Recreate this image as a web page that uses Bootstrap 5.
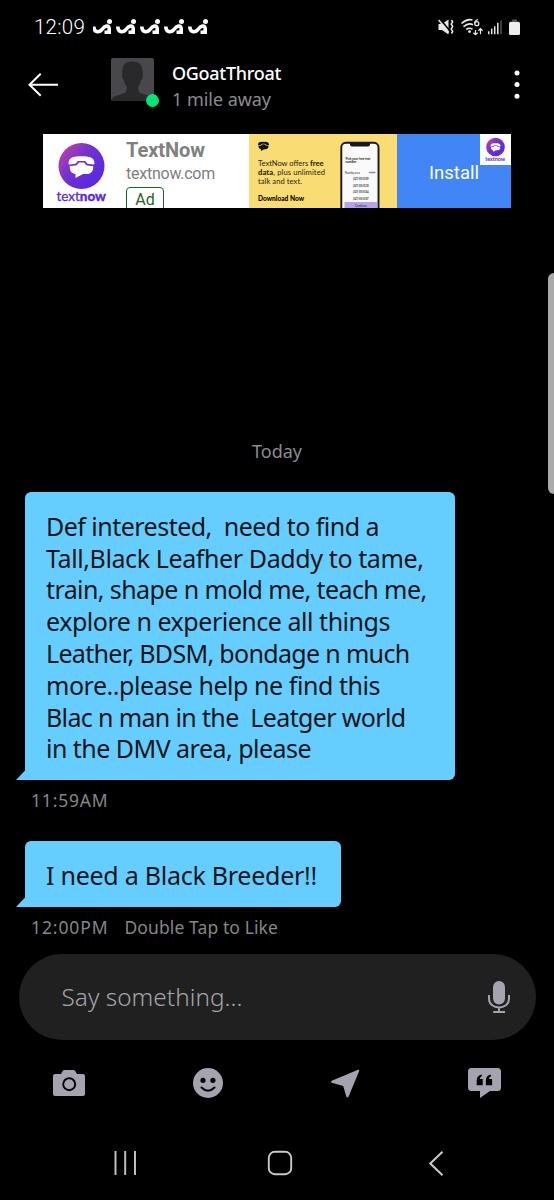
<!DOCTYPE html>
<html lang="en">
<head>
<meta charset="utf-8">
<meta name="viewport" content="width=device-width, initial-scale=1">
<title>Chat</title>
<link href="https://cdn.jsdelivr.net/npm/bootstrap@5.3.0/dist/css/bootstrap.min.css" rel="stylesheet">
<style>
body{background:#000;color:#fff;font-family:"Noto Sans",sans-serif;overflow:hidden}
svg{display:block;flex:none}
.phone{width:554px;height:1200px}
.fit{display:inline-block;white-space:pre}
.statusbar{height:54px;padding:0 32px 0 34px}
.clock{font:350 20.5px/55px Roboto,sans-serif}
.chat-head{height:66px;padding-left:28px}
.back{margin-top:18.5px}
.who{margin-top:6px}
.more{margin:16px 34px 0 0}
.avatar{width:43px;height:43px;margin:4px 18px 0 53px}
.online{width:13px;height:13px;background:#00e676;right:-5px;bottom:-6px}
.uname{font-size:18px;line-height:26px;font-weight:500}
.dist{font-size:18px;line-height:26px;color:#8b8b90}
.ad{margin:14px 43px 0;height:74px;font-family:Roboto,sans-serif;overflow:hidden}
.ad-main{width:206px;background:#fff;color:#808080;padding-left:12px}
.ad-copy{margin-left:19px;padding-top:3px}
.ad-title{font-size:20px;line-height:26px;font-weight:700}
.ad-url{font-size:16px;line-height:22px}
.ad-tag{width:38px;height:26px;margin-top:2px;border:1.5px solid #1f6426;border-radius:4px;color:#1f6426;font-size:16px;line-height:23px}
.ad-cta{width:114px;background:#4285f4;font-size:18.5px;line-height:79px}
.ad-mini{width:31px;height:31px;top:0;right:0}
.messages{height:746px}
.day{margin-top:230px;height:26px;line-height:26px;font-size:18px;color:#8b8b90}
.bubble{margin-left:25px;background:#66ceff;color:#08141a;border-radius:6px 6px 6px 0;padding-left:21px;font-size:25px;line-height:31.8px}
.bubble::before{content:"";position:absolute;left:-9px;bottom:0;width:9.5px;height:10px;background:inherit;clip-path:polygon(0 100%,100% 0,100% 100%)}
.bubble .ln{height:31.8px}
.bubble-a{margin-top:28px;width:430px;height:288px;padding-top:18.8px}
.bubble-b{margin-top:29px;width:316px;height:66px;padding-top:19px}
.stamp{margin-left:31px;height:32px;padding-top:4px;font-size:17.5px;line-height:32px;color:#85858a}
.like{margin-left:16px}
.compose{margin:0 18.5px;height:86px;border-radius:43px;background:#202020;padding:0 26px 0 43px}
.hint{font-size:24.3px;color:#a5a5aa;font-weight:300;padding-top:1px}
.tools{height:86px}
.sysnav{height:74px;padding:0 40px 0 47px}
.edge{right:0;top:273px;width:6.5px;height:221px;background:#aaa;border-radius:6px 0 0 6px}
</style>
</head>
<body>
<svg width="0" height="0" class="position-absolute" aria-hidden="true">
  <defs>
    <linearGradient id="violet" x1="0" y1="0.1" x2="0.8" y2="0.8"><stop offset="0" stop-color="#c343a4"/><stop offset=".5" stop-color="#7431d3"/><stop offset="1" stop-color="#5b29df"/></linearGradient>
    <symbol id="handset" viewBox="0 0 28 22"><path d="M1 7.500C1 1.500 6 .3 14 .3S27 1.500 27 7.500Q27 8.700 25.500 8.500L20.500 7.800C18.500 7.500 19 5 17 5H11C9 5 9.500 7.500 7.500 7.800L2.500 8.500Q1 8.700 1 7.500z"/><path d="M2.200 10.200L8 9.400C10.500 9 10.500 6.400 12 6.400h4c1.500 0 1.500 2.600 4 3l5.800.8C25.800 16 23 18 19 18h-3.500L8 22v-4C4.500 17.500 2.200 15.500 2.200 10.200z"/></symbol>
  </defs>
</svg>
<main class="phone position-relative d-flex flex-column">
  <div class="statusbar d-flex align-items-center">
    <span class="clock"><span class="fit" data-w="51">12:09</span></span>
    <svg width="120" height="18" viewBox="0 0 120 18" class="ms-2" aria-hidden="true">
      <g fill="none" stroke="#fff" stroke-width="3.600" stroke-linecap="butt" stroke-linejoin="round">
        <path id="sw" d="M.8 8.500C.8 14.500 6 15 9 11.500C11.500 8 16.200 6 16.200 11V16M16.200 14.200H11.500"/>
        <use href="#sw" x="24"/><use href="#sw" x="48"/><use href="#sw" x="72"/><use href="#sw" x="96"/>
      </g>
      <g fill="#fff"><circle cx="16.500" cy="3.500" r="2.500"/><circle cx="40.500" cy="3.500" r="2.500"/><circle cx="64.500" cy="3.500" r="2.500"/><circle cx="88.500" cy="3.500" r="2.500"/><circle cx="112.500" cy="3.500" r="2.500"/></g>
    </svg>
    <svg class="ms-auto" width="84" height="18" viewBox="438 18 84 18" aria-hidden="true">
      <path d="M438.500 24h3.500l6.500-4.500v15l-6.500-4.500h-3.500z" fill="#e8e8e8"/><path d="M439.500 18.500l11 13" stroke="#000" stroke-width="1.700"/><path d="M438.700 20l10 12.500" stroke="#e8e8e8" stroke-width="1.500"/>
      <path d="M451.500 20l1.200 2-1.500 2 1.500 2.500-1.500 2.500 1.500 2.500-1.200 2" fill="none" stroke="#e8e8e8" stroke-width="1.500"/>
      <g fill="none" stroke="#e8e8e8" stroke-width="1.600"><path d="M461.500 23.500q5.500-5 11-3.500M463.500 26.700q5-4.300 9.500-2M466.300 29.500q3.200-2.300 6.200-.2"/><path d="M475.500 35v-5M473.400 32.700l2.100 2 2.100-2M480.500 34.200v-5.500M478.400 30.700l2.100-2 2.100 2" stroke-width="1.200"/><path d="M478 19.500q-3.300 1-3.300 4" stroke-width="1.300"/><circle cx="476.800" cy="23.700" r="2" stroke-width="1.300"/></g><circle cx="469.500" cy="31.600" r="1.400" fill="#e8e8e8"/>
      <path d="M488.700 34.300v-3M491.700 34.300v-5.500M494.700 34.300v-8M497.800 34.300v-11.500" stroke="#e8e8e8" stroke-width="1.500"/><path d="M501 34.300V20.500" stroke="#555" stroke-width="1.500"/>
      <path d="M512 19.500h5v2h2.500v3h-10v-3h2.500z" fill="#555"/><rect x="509" y="22" width="11" height="13" rx="1.500" fill="#eee"/>
    </svg>
  </div>

  <header class="chat-head d-flex align-items-start">
    <svg class="back" width="30" height="24" viewBox="0 0 30 24" fill="none" stroke="#fff" stroke-width="2" role="img" aria-label="Back"><path d="M30 11.700H1.300M12.700 .7L1.500 11.700l11.200 11"/></svg>
    <div class="avatar position-relative">
      <svg width="43" height="43" viewBox="0 0 43 43"><rect width="43" height="43" rx="2" fill="#47474c"/><path d="M.5 43q0-3.500 4-5l8.500-2.700q3-1.300 3-6.300-2.500-3-3.200-7-2.300-2-1.500-6C10.800 7 14 3.500 21.500 3.500S32 7 31.700 16q.8 4-1.500 6-.7 4-3.200 7 0 5 3 6.300l8.500 2.700q4 1.500 4 5z" fill="#29292c"/></svg>
      <span class="online position-absolute rounded-circle"></span>
    </div>
    <div class="who">
      <div class="uname"><span class="fit" data-w="109">OGoatThroat</span></div>
      <div class="dist"><span class="fit" data-w="99">1 mile away</span></div>
    </div>
    <svg width="6" height="30" viewBox="0 0 6 30" class="more ms-auto" fill="#fff" role="img" aria-label="Menu"><circle cx="3" cy="3" r="2.500"/><circle cx="3" cy="14.600" r="2.500"/><circle cx="3" cy="26.200" r="2.500"/></svg>
  </header>

  <section class="ad d-flex flex-shrink-0 position-relative">
    <div class="ad-main d-flex">
      <svg width="52" height="74" viewBox="55 134 52 74"><circle cx="81.500" cy="166" r="23" fill="url(#violet)"/><use href="#handset" x="67.500" y="156" width="28" height="22" fill="#fff"/><text x="56.500" y="200.500" font-family="Lato,sans-serif" font-size="14" fill="#5b2bd9" stroke="#5b2bd9" stroke-width=".3" textLength="49.500" lengthAdjust="spacingAndGlyphs">text<tspan font-weight="900">now</tspan></text></svg>
      <div class="ad-copy">
        <div class="ad-title"><span class="fit" data-w="79">TextNow</span></div>
        <div class="ad-url"><span class="fit" data-w="89">textnow.com</span></div>
        <div class="ad-tag text-center">Ad</div>
      </div>
    </div>
    <svg width="148" height="74" viewBox="249 134 148 74" font-family="Lato,sans-serif">
      <path d="M249 134h148v74H249z" fill="#f9dc73"/>
      <use href="#handset" x="257.500" y="141.500" width="12" height="9.400" fill="#111"/>
      <g font-size="7.600" fill="#2b2611"><text x="258" y="166" textLength="65.500">TextNow offers <tspan font-weight="900">free</tspan></text><text x="258" y="175" textLength="67"><tspan font-weight="900">data</tspan>, plus unlimited</text><text x="258" y="184.300" textLength="44">talk and text.</text><text x="258" y="200.500" textLength="46" font-size="7.200" font-weight="900" fill="#000" lengthAdjust="spacingAndGlyphs">Download Now</text></g>
      <rect x="341.300" y="142.800" width="37.200" height="72" rx="4.500" fill="#fafafa" stroke="#17171d" stroke-width="1.900"/>
      <path d="M350 142h20v2.500q0 2-2 2h-16q-2 0-2-2z" fill="#17171d"/>
      <g font-size="3.700" font-weight="700" fill="#222"><text x="345.500" y="159.500" textLength="25" lengthAdjust="spacingAndGlyphs">Pick your free text</text><text x="345.500" y="163.300" font-size="3.200">number</text><text x="345" y="174" font-size="2.800" font-weight="400">Nearby area</text><g font-size="3.500"><text x="353" y="180" textLength="15.500" lengthAdjust="spacingAndGlyphs">(347) 555-0109</text><text x="353" y="186.800" textLength="15.500" lengthAdjust="spacingAndGlyphs">(347) 555-0138</text><text x="353" y="193" textLength="15.500" lengthAdjust="spacingAndGlyphs">(347) 555-0164</text><text x="353" y="199.500" textLength="15.500" lengthAdjust="spacingAndGlyphs">(347) 555-0187</text></g></g>
      <path d="M369 172.500h6.500" stroke="#8c82dc" stroke-width="1.500"/><path d="M344.500 202h32.500v6h-32.500z" fill="#b5a4ed"/><text x="355" y="206.500" font-size="3" fill="#222">Continue</text>
    </svg>
    <div class="ad-cta text-center"><span class="fit" data-w="50">Install</span></div>
    <svg class="ad-mini position-absolute" viewBox="0 0 31 31"><path d="M0 0h31v31H0z" fill="#fff"/><circle cx="15.500" cy="13" r="9.300" fill="url(#violet)"/><use href="#handset" x="10" y="9" width="11" height="9" fill="#fff"/><text x="5.200" y="26.800" font-family="Lato,sans-serif" font-size="5.500" font-weight="700" fill="#5b2bd9" textLength="20">textnow</text></svg>
  </section>

  <section class="messages flex-shrink-0">
    <div class="day text-center"><span class="fit" data-w="50">Today</span></div>
    <div class="bubble bubble-a position-relative">
      <div class="ln"><span class="fit" data-w="333">Def interested,  need to find a</span></div>
      <div class="ln"><span class="fit" data-w="377.500">Tall,Black Leafher Daddy to tame,</span></div>
      <div class="ln"><span class="fit" data-w="380.500">train, shape n mold me, teach me,</span></div>
      <div class="ln"><span class="fit" data-w="344">explore n experience all things</span></div>
      <div class="ln"><span class="fit" data-w="363.500">Leather, BDSM, bondage n much</span></div>
      <div class="ln"><span class="fit" data-w="334">more..please help ne find this</span></div>
      <div class="ln"><span class="fit" data-w="359.500">Blac n man in the  Leatger world</span></div>
      <div class="ln"><span class="fit" data-w="265">in the DMV area, please</span></div>
    </div>
    <div class="stamp"><span class="fit" data-w="77.500">11:59AM</span></div>
    <div class="bubble bubble-b position-relative"><span class="fit" data-w="271">I need a Black Breeder!!</span></div>
    <div class="stamp d-flex"><span class="fit" data-w="77.500">12:00PM</span><span class="fit like" data-w="153.500">Double Tap to Like</span></div>
  </section>

  <div class="compose d-flex align-items-center flex-shrink-0">
    <span class="hint"><span class="fit" data-w="181">Say something...</span></span>
    <svg class="ms-auto" width="22" height="34" viewBox="0 0 22 34" role="img" aria-label="Voice"><rect x="5" y="1" width="12" height="23.500" rx="6" fill="#a5a3af"/><path d="M1 15v3.500c0 12 20 12 20 0V15M11 27.500v4M5.200 32h11.800" fill="none" stroke="#a5a3af" stroke-width="2"/></svg>
  </div>

  <div class="tools row g-0 align-items-center flex-shrink-0" aria-label="Attachments">
    <div class="col-3 d-flex justify-content-center"><svg width="34" height="28" viewBox="0 0 34 28" fill="#a5a3af"><path d="M9 5l2-3.500Q11.600 1 12.500 1h9q.9 0 1.500.7L25 5h6q2 0 2 2v18q0 2-2 2H3q-2 0-2-2V7q0-2 2-2z"/><circle cx="17.200" cy="15.200" r="6" stroke="#000" stroke-width="1.900"/></svg></div>
    <div class="col-3 d-flex justify-content-center"><svg width="30" height="30" viewBox="0 0 30 30"><circle cx="15" cy="15" r="15" fill="#a5a3af"/><circle cx="10" cy="12.300" r="2.600"/><circle cx="19.900" cy="12.300" r="2.600"/><path d="M8.500 19.500q6.500 6.500 13 0" fill="none" stroke="#000" stroke-width="2" stroke-linecap="round"/></svg></div>
    <div class="col-3 d-flex justify-content-center"><svg width="31" height="30" viewBox="0 0 31 30" fill="#a5a3af"><path d="M.8 12.800L27 1.700q1.500-.3 1.200 1.300L17.500 28.700q-1.300 1.700-2.200-.2L12.200 18 .8 14.700q-1.500-1 0-1.900z"/></svg></div>
    <div class="col-3 d-flex justify-content-center"><svg width="33" height="30" viewBox="0 0 33 30" fill="#a5a3af"><path d="M3.500 0h26Q33 0 33 3.500v16q0 3.500-3.500 3.500H22l-10 7v-7H3.500Q0 23 0 19.500v-16Q0 0 3.500 0z"/><path d="M8.700 17.300v-5q0-4.500 5-5.800v1.800q-2 1-2 2.800h3v6.200zM17.900 17.300v-5q0-4.500 5-5.800v1.800q-2 1-2 2.800h3.200v6.200z" fill="#000"/></svg></div>
  </div>

  <nav class="sysnav row g-0 align-items-center flex-shrink-0" aria-label="System">
    <div class="col-4 d-flex justify-content-center"><svg width="24" height="24" viewBox="0 0 24 24" stroke="#bdbdbd" stroke-width="2"><path d="M2.500 0v24M12.200 0v24M22 0v24"/></svg></div>
    <div class="col-4 d-flex justify-content-center"><svg width="26" height="26" viewBox="0 0 26 26" fill="none" stroke="#c8c8c8" stroke-width="1.900"><rect x="1.800" y="1.800" width="22.400" height="22.400" rx="6"/></svg></div>
    <div class="col-4 d-flex justify-content-center"><svg width="14" height="25" viewBox="0 0 14 25" fill="none" stroke="#c8c8c8" stroke-width="2"><path d="M13.500.8L1.300 12.500l12.200 11.700"/></svg></div>
  </nav>
  <div class="edge position-absolute"></div>
</main>
<script src="https://cdn.jsdelivr.net/npm/bootstrap@5.3.0/dist/js/bootstrap.bundle.min.js"></script>
<script>
// Track each line to its measure by spreading the difference between letters.
document.querySelectorAll('.fit').forEach(el => {
  const gap = (Number(el.dataset.w) - el.getBoundingClientRect().width) / el.textContent.length;
  el.style.letterSpacing = gap.toFixed(3) + 'px';
});
</script>
</body>
</html>
